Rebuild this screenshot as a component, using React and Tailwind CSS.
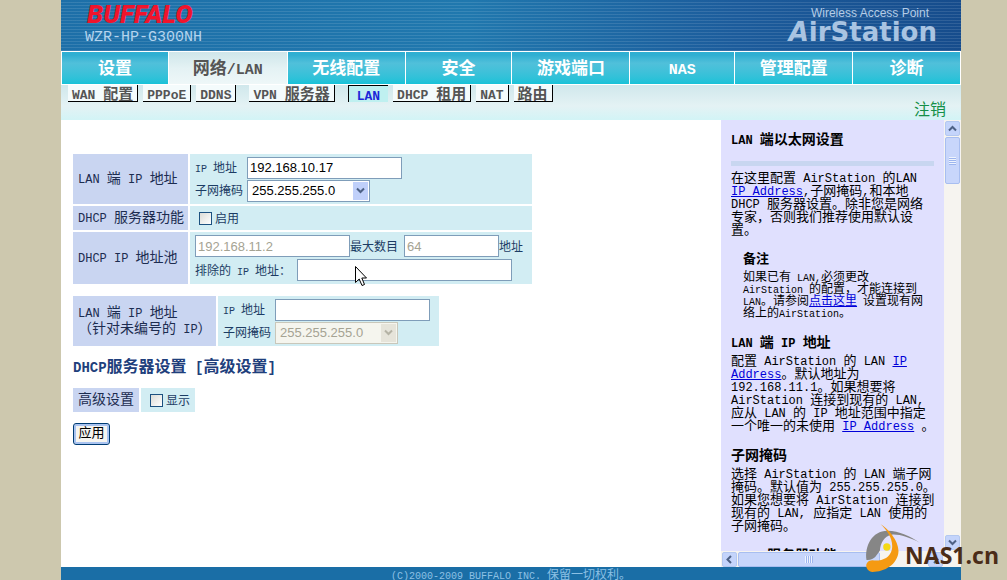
import clsx from "clsx";

const LATIN_SIZE = {
  12: "text-[10px]",
  13: "text-[12px]",
  14: "text-[12px]",
  15: "text-[13px]",
  16: "text-[14px]",
  17: "text-[15px]",
};

const CJK_SIZE = {
  12: "text-[12px]",
  13: "text-[13px]",
  14: "text-[14px]",
  15: "text-[15px]",
  16: "text-[16px]",
  17: "text-[17px]",
};

// Chinese at full size, latin runs in a monospaced face half as wide
function T({ size = 14, children }) {
  const parts = children.match(/[\x20-\x7e]+|[^\x20-\x7e]+/g);

  return (
    <span className={clsx("whitespace-pre", CJK_SIZE[size])}>
      {parts.map((part, index) =>
        /^[\x20-\x7e]/.test(part) ? (
          <span
            key={index}
            className={clsx(
              "font-['Liberation_Mono',monospace] leading-0",
              LATIN_SIZE[size],
            )}
          >
            {part}
          </span>
        ) : (
          part
        ),
      )}
    </span>
  );
}

const tabs = ["设置", "网络/LAN", "无线配置", "安全", "游戏端口", "NAS", "管理配置", "诊断"];

const subTabs = [
  { label: "WAN 配置" },
  { label: "PPPoE" },
  { label: "DDNS", gap: true },
  { label: "VPN 服务器", gap: true },
  { label: "LAN", active: true },
  { label: "DHCP 租用" },
  { label: "NAT" },
  { label: "路由" },
];

function Header() {
  return (
    <header className="h-[51px] shrink-0 flex justify-between pl-6 pr-6 bg-[repeating-linear-gradient(180deg,#0000_0_2px,#ffffff1c_2px_3px),linear-gradient(90deg,#1d6fa8,#2078ae_45%,#1c5c9c_75%,#164c8c)]">
      <div>
        <div className="h-7 pl-[2px] leading-7 text-[26px] font-black italic text-[#f0142c] font-['Roboto',sans-serif]">
          BUFFALO
        </div>
        <div className="h-5 leading-5 text-[15px] text-[#b4d4ee] font-['Liberation_Mono',monospace]">
          WZR-HP-G300NH
        </div>
      </div>
      <div className="text-right pt-[5px]">
        <div className="pr-2 text-[12px] leading-4 text-[#b4cce6] font-['Liberation_Sans',sans-serif]">
          Wireless Access Point
        </div>
        <div className="text-[26px] leading-[22px] font-bold text-[#a9c4e2] font-['DejaVu_Sans',sans-serif]">
          <i>A</i>irStation
        </div>
      </div>
    </header>
  );
}

function Nav() {
  return (
    <nav>
      <div className="h-[33px] grid grid-cols-[107fr_119fr_118fr_107fr_118fr_105fr_118fr_108fr] border-t border-l border-white">
        {tabs.map((tab, index) => (
          <a
            key={tab}
            href="#"
            className={clsx(
              "flex items-center justify-center border-r border-white font-bold leading-5 pb-[2px]",
              index === 1
                ? "bg-linear-to-b from-[#cfe6ea] via-[#e4f2f4] to-[#eef7f8] text-[#555]"
                : "bg-linear-to-b from-[#2fafd2] from-10% via-[#50c0da] via-35% to-[#16c2d8] text-white",
            )}
          >
            <T size={17}>{tab}</T>
          </a>
        ))}
      </div>
      <div className="h-[36px] flex justify-between border-t border-white bg-linear-to-b from-[#d0e8ec] via-[#e4f2f4] via-60% to-[#d2f4f6] pl-[7px] pr-[15px]">
        <div className="flex items-start gap-[5px]">
          {subTabs.map(({ label, active, gap }) => (
            <a
              key={label}
              href="#"
              className={clsx(
                "font-bold leading-4 text-[15px] border-black px-1",
                active
                  ? "border-t border-l px-2 bg-[#bff0f0] text-[#1c28d8]"
                  : "border-b border-r bg-[#f4fbfc] text-[#555]",
                gap && "mr-2",
              )}
            >
              <T size={15}>{label}</T>
            </a>
          ))}
        </div>
        <a href="#" className="self-end leading-6 text-[16px] text-[#149048]">
          注销
        </a>
      </div>
    </nav>
  );
}

function Label({ children, htmlFor }) {
  return (
    <label
      htmlFor={htmlFor}
      className="flex items-center pl-[5px] pb-1 bg-[#c9d5f1] text-[14px] leading-4 text-[#1c2c50]"
    >
      <span>{children}</span>
    </label>
  );
}

function TextBox({ className, ...props }) {
  return (
    <input
      type="text"
      className={clsx(
        "h-[22px] border border-[#7f9db9] bg-white px-[2px] text-[13px] text-black disabled:text-[#a5a393] font-['Liberation_Sans',sans-serif]",
        className,
      )}
      {...props}
    />
  );
}

function MaskSelect({ id, disabled }) {
  return (
    <span className="relative flex w-[123px]">
      <select
        id={id}
        disabled={disabled}
        className={clsx(
          "appearance-none w-full h-[22px] border pl-[4px] text-[13px] opacity-100 font-['Liberation_Sans',sans-serif]",
          disabled
            ? "border-[#c9c7ba] bg-[#f5f5ee] text-[#a5a393]"
            : "border-[#7f9db9] bg-white text-black",
        )}
      >
        <option>255.255.255.0</option>
      </select>
      <span
        className={clsx(
          "pointer-events-none absolute right-[2px] top-[2px] w-[15px] h-[18px] flex items-center justify-center",
          disabled ? "bg-[#e6e4da] text-[#b5b3a5]" : "bg-[#c0d0fa] text-[#4d6185]",
        )}
      >
        <Chevron direction="down" />
      </span>
    </span>
  );
}

const chevrons = {
  down: "M1 2.5 L4.5 6 L8 2.5",
  up: "M1 6.5 L4.5 3 L8 6.5",
  left: "M6 1 L2.5 4.5 L6 8",
  right: "M3 1 L6.5 4.5 L3 8",
};

function Chevron({ direction }) {
  return (
    <svg width="9" height="9" viewBox="0 0 9 9" fill="none" stroke="currentColor" strokeWidth="2">
      <path d={chevrons[direction]} />
    </svg>
  );
}

function AddressFields({ prefix, value, disabled }) {
  return (
    <div className="grid grid-cols-[52px_1fr] content-center gap-y-px bg-[#d2edf3] pl-[5px] text-[12px] leading-5 text-[#1c3c64]">
      <label htmlFor={`${prefix}-ip`}>
        <T size={12}>IP 地址</T>
      </label>
      <TextBox id={`${prefix}-ip`} className="w-[155px]" defaultValue={value} />
      <label htmlFor={`${prefix}-mask`}>
        <T size={12}>子网掩码</T>
      </label>
      <MaskSelect id={`${prefix}-mask`} disabled={disabled} />
    </div>
  );
}

function CheckField({ id, children }) {
  return (
    <div className="flex items-center gap-[3px] bg-[#d2edf3] pl-[9px] text-[#1c3c64]">
      <input
        id={id}
        type="checkbox"
        className="appearance-none w-[13px] h-[13px] border border-[#1c5180] bg-linear-to-br from-[#dcdcd7] to-white"
      />
      <label htmlFor={id} className="text-[12px] leading-4">
        {children}
      </label>
    </div>
  );
}

function LanForm() {
  return (
    <form className="flex-1 min-w-0 pl-3 pt-[34px] bg-white">
      <div className="grid w-max grid-cols-[115px_342px] grid-rows-[50px_24px_52px] gap-[2px]">
        <Label htmlFor="lan-ip">
          <T>LAN 端 IP 地址</T>
        </Label>
        <AddressFields prefix="lan" value="192.168.10.17" />

        <Label htmlFor="dhcp">
          <T>DHCP 服务器功能</T>
        </Label>
        <CheckField id="dhcp">启用</CheckField>

        <Label htmlFor="pool">
          <T>DHCP IP 地址池</T>
        </Label>
        <div className="flex flex-col justify-center gap-[2px] bg-[#d2edf3] pl-[5px] text-[12px] text-[#1c3c64]">
          <div className="flex items-center">
            <TextBox id="pool" className="w-[155px]" defaultValue="192.168.11.2" disabled />
            <label htmlFor="max" className="w-[54px]">
              最大数目
            </label>
            <TextBox id="max" className="w-[95px]" defaultValue="64" disabled />
            <span>地址</span>
          </div>
          <div className="flex items-center">
            <label htmlFor="exclude" className="w-[102px]">
              <T size={12}>排除的 IP 地址：</T>
            </label>
            <TextBox id="exclude" className="w-[215px]" />
          </div>
        </div>
      </div>

      <div className="mt-3 grid w-max grid-cols-[143px_221px] grid-rows-[50px] gap-[2px]">
        <Label htmlFor="unnumbered-ip">
          <T>LAN 端 IP 地址</T>
          <br />
          <T>（针对未编号的 IP）</T>
        </Label>
        <AddressFields prefix="unnumbered" value="" disabled />
      </div>

      <h2 className="mt-[10px] mb-[14px] leading-[18px] font-bold text-[#1f3f7c]">
        <T size={16}>DHCP服务器设置 [高级设置]</T>
      </h2>

      <div className="grid w-max grid-cols-[66px_54px] grid-rows-[24px] gap-[2px]">
        <Label htmlFor="advanced">
          <T>高级设置</T>
        </Label>
        <CheckField id="advanced">显示</CheckField>
      </div>

      <button
        type="button"
        className="mt-[11px] w-[37px] h-[22px] rounded-[3px] border border-[#003c74] bg-[#f6f5f0] pb-1 text-[13px] leading-4 text-black shadow-[inset_0_0_0_2px_#a9c3f0]"
      >
        应用
      </button>
    </form>
  );
}

function Link({ children, size = 13 }) {
  return (
    <a href="#" className="text-[#0000d8] underline">
      <T size={size}>{children}</T>
    </a>
  );
}

function ScrollButton({ direction }) {
  return (
    <button
      type="button"
      aria-label={direction}
      className="w-[15px] h-[15px] shrink-0 flex items-center justify-center rounded-[2px] border border-[#b4c8f0] bg-[#c4d4fb] text-[#4d6185]"
    >
      <Chevron direction={direction} />
    </button>
  );
}

function Help() {
  return (
    <aside className="w-[240px] shrink-0 grid grid-cols-[1fr_17px] grid-rows-[minmax(0,1fr)_16px] bg-[#f6f4f0] text-black">
      <div className="overflow-hidden bg-[#e0e0fe] pl-[10px] pt-[10px] whitespace-nowrap text-[14px]">
        <h3 className="font-bold leading-4">
          <T>LAN 端以太网设置</T>
        </h3>
        <hr className="mt-[15px] mr-[10px] h-[5px] border-0 bg-[#c8d6f0]" />
        <p className="mt-1 text-[13px] leading-[13px]">
          <T size={13}>在这里配置 AirStation 的LAN</T>
          <br />
          <Link>IP Address</Link>
          <T size={13}>,子网掩码,和本地</T>
          <br />
          <T size={13}>DHCP 服务器设置。除非您是网络</T>
          <br />
          <T size={13}>专家，否则我们推荐使用默认设</T>
          <br />
          <T size={13}>置。</T>
        </p>
        <div className="mt-[15px] pl-3">
          <h4 className="text-[13px] font-bold leading-4">备注</h4>
          <p className="mt-1 text-[12px] leading-[12px]">
            <T size={12}>如果已有 LAN,必须更改</T>
            <br />
            <T size={12}>AirStation 的配置，才能连接到</T>
            <br />
            <T size={12}>LAN。请参阅</T>
            <Link size={12}>点击这里</Link>
            <T size={12}> 设置现有网</T>
            <br />
            <T size={12}>络上的AirStation。</T>
          </p>
        </div>
        <h3 className="mt-[15px] font-bold leading-4">
          <T>LAN 端 IP 地址</T>
        </h3>
        <p className="mt-1 text-[13px] leading-[13px]">
          <T size={13}>配置 AirStation 的 LAN </T>
          <Link>IP</Link>
          <br />
          <Link>Address</Link>
          <T size={13}>。默认地址为</T>
          <br />
          <T size={13}>192.168.11.1。如果想要将</T>
          <br />
          <T size={13}>AirStation 连接到现有的 LAN,</T>
          <br />
          <T size={13}>应从 LAN 的 IP 地址范围中指定</T>
          <br />
          <T size={13}>一个唯一的未使用 </T>
          <Link>IP Address</Link>
          <T size={13}> 。</T>
        </p>
        <h3 className="mt-[15px] font-bold leading-4">
          <T>子网掩码</T>
        </h3>
        <p className="mt-1 text-[13px] leading-[13px]">
          <T size={13}>选择 AirStation 的 LAN 端子网</T>
          <br />
          <T size={13}>掩码。默认值为 255.255.255.0。</T>
          <br />
          <T size={13}>如果您想要将 AirStation 连接到</T>
          <br />
          <T size={13}>现有的 LAN, 应指定 LAN 使用的</T>
          <br />
          <T size={13}>子网掩码。</T>
        </p>
        <h3 className="mt-[15px] font-bold leading-4">
          <T>DHCP 服务器功能</T>
        </h3>
      </div>

      <div className="flex flex-col items-center gap-px py-px">
        <ScrollButton direction="up" />
        <div className="w-[15px] h-[47px] flex items-center justify-center rounded-[2px] border border-[#a8bef0] bg-[#c8d6fb]">
          <span className="w-[7px] h-[8px] bg-[repeating-linear-gradient(180deg,#eef4fe_0_1px,#9db5ee_1px_2px)]" />
        </div>
        <div className="flex-1" />
        <ScrollButton direction="down" />
      </div>

      <div className="flex items-center gap-px px-px">
        <ScrollButton direction="left" />
        <div className="w-[142px] h-[15px] flex items-center justify-center rounded-[2px] border border-[#a8bef0] bg-[#c8d6fb]">
          <span className="w-[8px] h-[7px] bg-[repeating-linear-gradient(90deg,#eef4fe_0_1px,#9db5ee_1px_2px)]" />
        </div>
        <div className="flex-1" />
        <ScrollButton direction="right" />
      </div>
    </aside>
  );
}

function Watermark() {
  return (
    <div className="pointer-events-none absolute right-2 bottom-[7px] flex items-end">
      <svg width="57" height="50" viewBox="15 25 170 150">
        <path
          d="M22 136 C16 95 38 48 85 48 C120 48 155 65 182 84 C150 68 120 58 98 60 C74 64 64 85 62 108 C54 118 46 138 22 136Z"
          fill="#868686"
        />
        <path
          d="M64 28 C85 42 118 75 118 110 C116 150 75 172 40 172 C16 170 14 138 40 137 C68 140 92 130 98 105 C104 75 85 48 64 28Z"
          fill="#f59a12"
        />
        <circle cx="83" cy="97" r="11" fill="#f4d816" />
      </svg>
      <span className="-ml-4 mb-1 text-[23px] leading-7 font-bold text-[#4a2c18] font-['Open_Sans',sans-serif]">
        NAS1.cn
      </span>
    </div>
  );
}

// Mouse pointer resting over the exclude box
function Pointer() {
  return (
    <svg
      className="pointer-events-none absolute left-[355px] top-[266px]"
      width="12"
      height="21"
      viewBox="0 0 12 21"
    >
      <path
        d="M0.5 0.5 V16.5 L4.2 13 L7 19.5 L9.5 18.5 L6.8 12 H11.5 Z"
        fill="white"
        stroke="black"
      />
    </svg>
  );
}

export default function App() {
  return (
    <div className="relative h-screen overflow-hidden bg-[#cdc8ae] pl-[61px] pr-[46px] font-['Noto_Sans_CJK_SC',sans-serif]">
      <div className="h-full flex flex-col">
        <Header />
        <Nav />
        <main className="flex-1 min-h-0 flex">
          <LanForm />
          <Help />
        </main>
        <footer className="h-[13px] shrink-0 bg-[#1a6ea6] text-center text-[12px] leading-[13px] text-[#8cc0e4]">
          <T size={12}>(C)2000-2009 BUFFALO INC. 保留一切权利。</T>
        </footer>
      </div>
      <Pointer />
      <Watermark />
    </div>
  );
}
